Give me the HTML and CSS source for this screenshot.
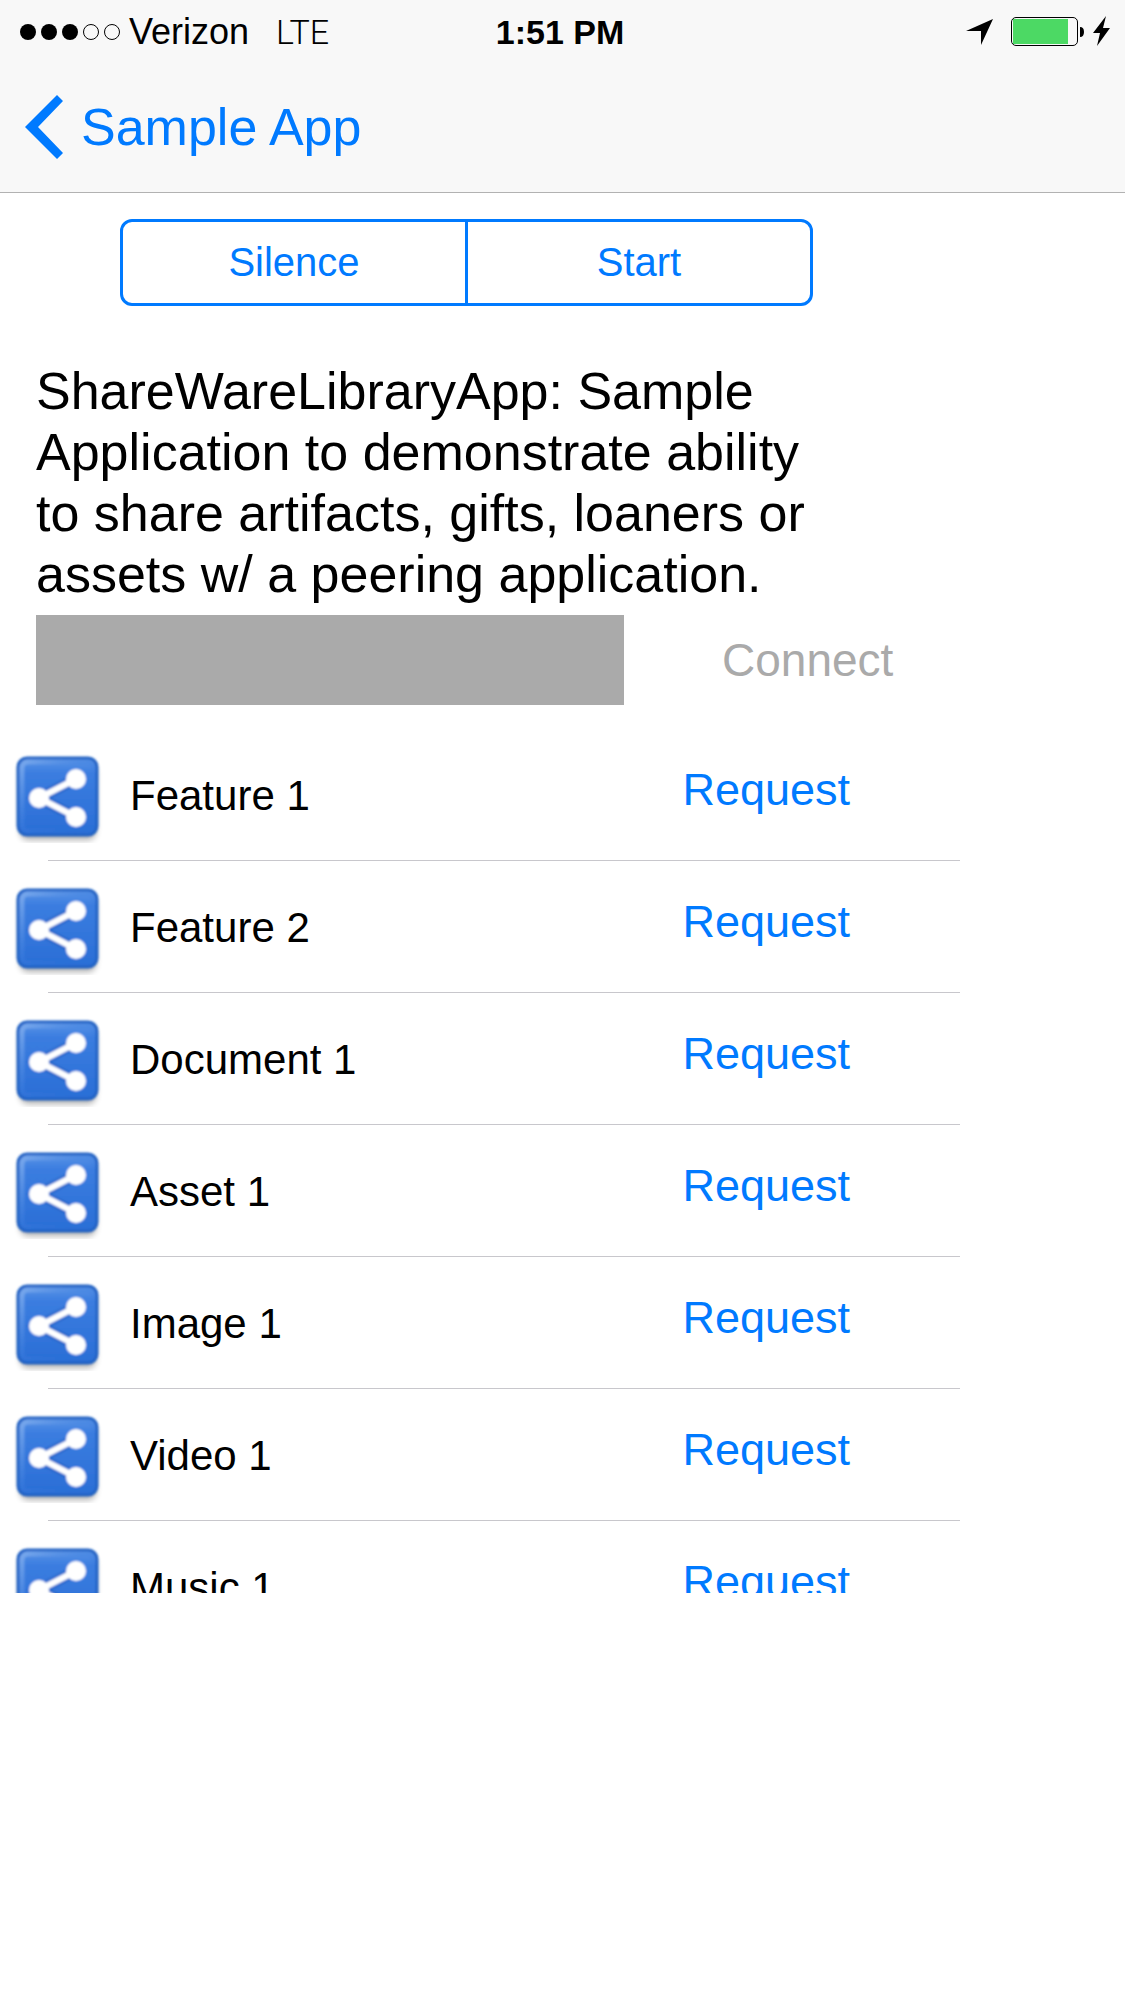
FILE: index.html
```html
<!DOCTYPE html>
<html lang="en">
<head>
<meta charset="utf-8">
<meta name="viewport" content="width=device-width, initial-scale=1">
<title>Sample App</title>
<link rel="stylesheet" href="styles.css">
</head>
<body>
<svg width="0" height="0" class="sprite" aria-hidden="true">
  <defs>
    <linearGradient id="tile" x1="0" y1="0" x2="0" y2="1">
      <stop offset="0" stop-color="#5b95e6"/>
      <stop offset="0.2" stop-color="#3b7de0"/>
      <stop offset="1" stop-color="#2a6ed6"/>
    </linearGradient>
    <linearGradient id="rim" x1="0" y1="0" x2="1" y2="1">
      <stop offset="0" stop-color="#78a8ec"/>
      <stop offset="0.5" stop-color="#3f7fdf" stop-opacity="0.3"/>
      <stop offset="1" stop-color="#2a6ed6" stop-opacity="0"/>
    </linearGradient>
    <filter id="soft" x="-20%" y="-20%" width="140%" height="140%"><feGaussianBlur stdDeviation="3"/></filter>
    <filter id="edge" x="-10%" y="-10%" width="120%" height="120%"><feGaussianBlur stdDeviation="1.3"/></filter>
    <symbol id="share" viewBox="0 0 96 96">
      <rect x="10" y="16" width="76" height="77" rx="8" fill="#000" opacity="0.3" filter="url(#soft)"/>
      <g filter="url(#edge)">
        <rect x="8" y="11" width="79" height="77" rx="9" fill="url(#tile)" stroke="#2062c4" stroke-width="3"/>
        <rect x="12" y="15" width="71" height="69" rx="6" fill="none" stroke="url(#rim)" stroke-width="5"/>
        <path d="M66 32 29 51 66 70" fill="none" stroke="#1c57b4" stroke-opacity="0.35" stroke-width="12"/>
        <path d="M66 32 29 51 66 70" fill="none" stroke="#fff" stroke-width="6"/>
        <circle cx="29" cy="51" r="10" fill="#fff"/>
        <circle cx="66" cy="32" r="10" fill="#fff"/>
        <circle cx="66" cy="70" r="10" fill="#fff"/>
      </g>
    </symbol>
  </defs>
</svg>
<header class="top">
  <div class="status">
    <div class="status-left">
      <svg width="100" height="16" viewBox="0 0 100 16" role="img" aria-label="Signal 3 of 5">
        <circle cx="8" cy="8" r="8"/><circle cx="29" cy="8" r="8"/><circle cx="50" cy="8" r="8"/>
        <g fill="none" stroke="#000"><circle cx="71" cy="8" r="7.5"/><circle cx="92" cy="8" r="7.5"/></g>
      </svg>
      <span class="carrier">Verizon</span>
      <span class="network">LTE</span>
    </div>
    <time class="clock">1:51 PM</time>
    <div class="status-right">
      <svg width="146" height="32" viewBox="0 0 146 32" role="img" aria-label="Location on, battery charging">
        <path d="M2 15 29 3 17 29V15Z"/>
        <rect x="47.5" y="1.5" width="66" height="28" rx="4.5" fill="none" stroke="#000"/>
        <path d="M49 3h55v25H49Z" fill="#4cd964"/>
        <path d="M116 11q4 0 4 5t-4 5Z"/>
        <path d="M142 0 129 17H136L133 30 146 12H139Z"/>
      </svg>
    </div>
  </div>
  <nav class="nav">
    <a class="back" href="#">
      <svg width="38" height="64" viewBox="0 0 38 64" aria-hidden="true"><path d="M32 0 38 6 13 32 38 58 32 64 0 32Z" fill="#007aff"/></svg>
      <span>Sample App</span>
    </a>
  </nav>
</header>
<main>
  <div class="segments">
    <button class="segment" type="button">Silence</button>
    <button class="segment" type="button">Start</button>
  </div>
  <p class="about">ShareWareLibraryApp: Sample<br>Application to demonstrate ability<br>to share artifacts, gifts, loaners or<br>assets w/ a peering application.</p>
  <div class="connect-row">
    <input class="peer" type="text" aria-label="Peer">
    <button class="connect" type="button" disabled>Connect</button>
  </div>
  <ul class="list">
    <li><div class="row"><svg class="icon" aria-hidden="true"><use href="#share"/></svg><span class="name">Feature 1</span><button class="request" type="button">Request</button></div></li>
    <li><div class="row"><svg class="icon" aria-hidden="true"><use href="#share"/></svg><span class="name">Feature 2</span><button class="request" type="button">Request</button></div></li>
    <li><div class="row"><svg class="icon" aria-hidden="true"><use href="#share"/></svg><span class="name">Document 1</span><button class="request" type="button">Request</button></div></li>
    <li><div class="row"><svg class="icon" aria-hidden="true"><use href="#share"/></svg><span class="name">Asset 1</span><button class="request" type="button">Request</button></div></li>
    <li><div class="row"><svg class="icon" aria-hidden="true"><use href="#share"/></svg><span class="name">Image 1</span><button class="request" type="button">Request</button></div></li>
    <li><div class="row"><svg class="icon" aria-hidden="true"><use href="#share"/></svg><span class="name">Video 1</span><button class="request" type="button">Request</button></div></li>
    <li><div class="row"><svg class="icon" aria-hidden="true"><use href="#share"/></svg><span class="name">Music 1</span><button class="request" type="button">Request</button></div></li>
  </ul>
</main>
</body>
</html>
```
FILE: styles.css
```css
* { box-sizing: border-box; }

body {
  margin: 0;
  background: #fff;
  color: #000;
  font-family: "Liberation Sans", Arial, sans-serif;
}

button {
  margin: 0;
  padding: 0;
  border: 0;
  background: none;
  color: #007aff;
  font: inherit;
}

svg { display: block; flex: none; }
.sprite { position: absolute; }

.top {
  background: #f8f8f8;
  border-bottom: 1px solid #b2b2b2;
}

.status {
  display: grid;
  grid-template-columns: 1fr auto 1fr;
  align-items: center;
  height: 60px;
  padding: 3px 15px 0 20px;
  font-size: 36px;
  line-height: 40px;
}

.status-left { display: flex; align-items: center; gap: 9px; }
.status-right { display: flex; justify-content: flex-end; }
.network { margin-left: 18px; font-family: Roboto, sans-serif; font-weight: 300; font-size: 34px; }
.clock { padding-right: 10px; font-size: 34px; font-weight: 700; }

.nav { height: 132px; padding: 2px 25px 0; display: flex; align-items: center; }

.back {
  display: flex;
  align-items: center;
  gap: 18px;
  color: #007aff;
  font-size: 52px;
  line-height: 60px;
  text-decoration: none;
}

.segments {
  display: flex;
  max-width: 693px;
  height: 87px;
  margin: 26px 120px 0;
  border: 3px solid #007aff;
  border-radius: 12px;
}

.segment { flex: 1; font-size: 40px; }
.segment + .segment { border-left: 3px solid #007aff; }

.about {
  margin: 55px 36px 0;
  font-size: 52px;
  line-height: 61px;
}

.connect-row {
  display: flex;
  align-items: center;
  gap: 98px;
  margin: 10px 36px 0;
}

.peer {
  flex: 0 1 588px;
  min-width: 0;
  height: 90px;
  border: 0;
  border-radius: 0;
  padding: 0 12px;
  background: #aaa;
  font-size: 42px;
}

.connect { color: #aaa; font-size: 46px; }

.list {
  max-width: 960px;
  max-height: 864px;
  margin: 24px 0 0;
  padding: 0;
  overflow: hidden;
  list-style: none;
}

.list li::after {
  content: "";
  display: block;
  height: 1px;
  margin-left: 48px;
  background: #c8c7cc;
}

.row {
  display: grid;
  grid-template-columns: 96px 1fr auto;
  column-gap: 24px;
  align-items: center;
  height: 131px;
  padding: 0 110px 0 10px;
}

.icon { width: 96px; height: 96px; }
.name { padding-top: 2px; font-size: 42px; line-height: 48px; }
.request { padding-bottom: 10px; font-size: 45px; line-height: 52px; }
```
